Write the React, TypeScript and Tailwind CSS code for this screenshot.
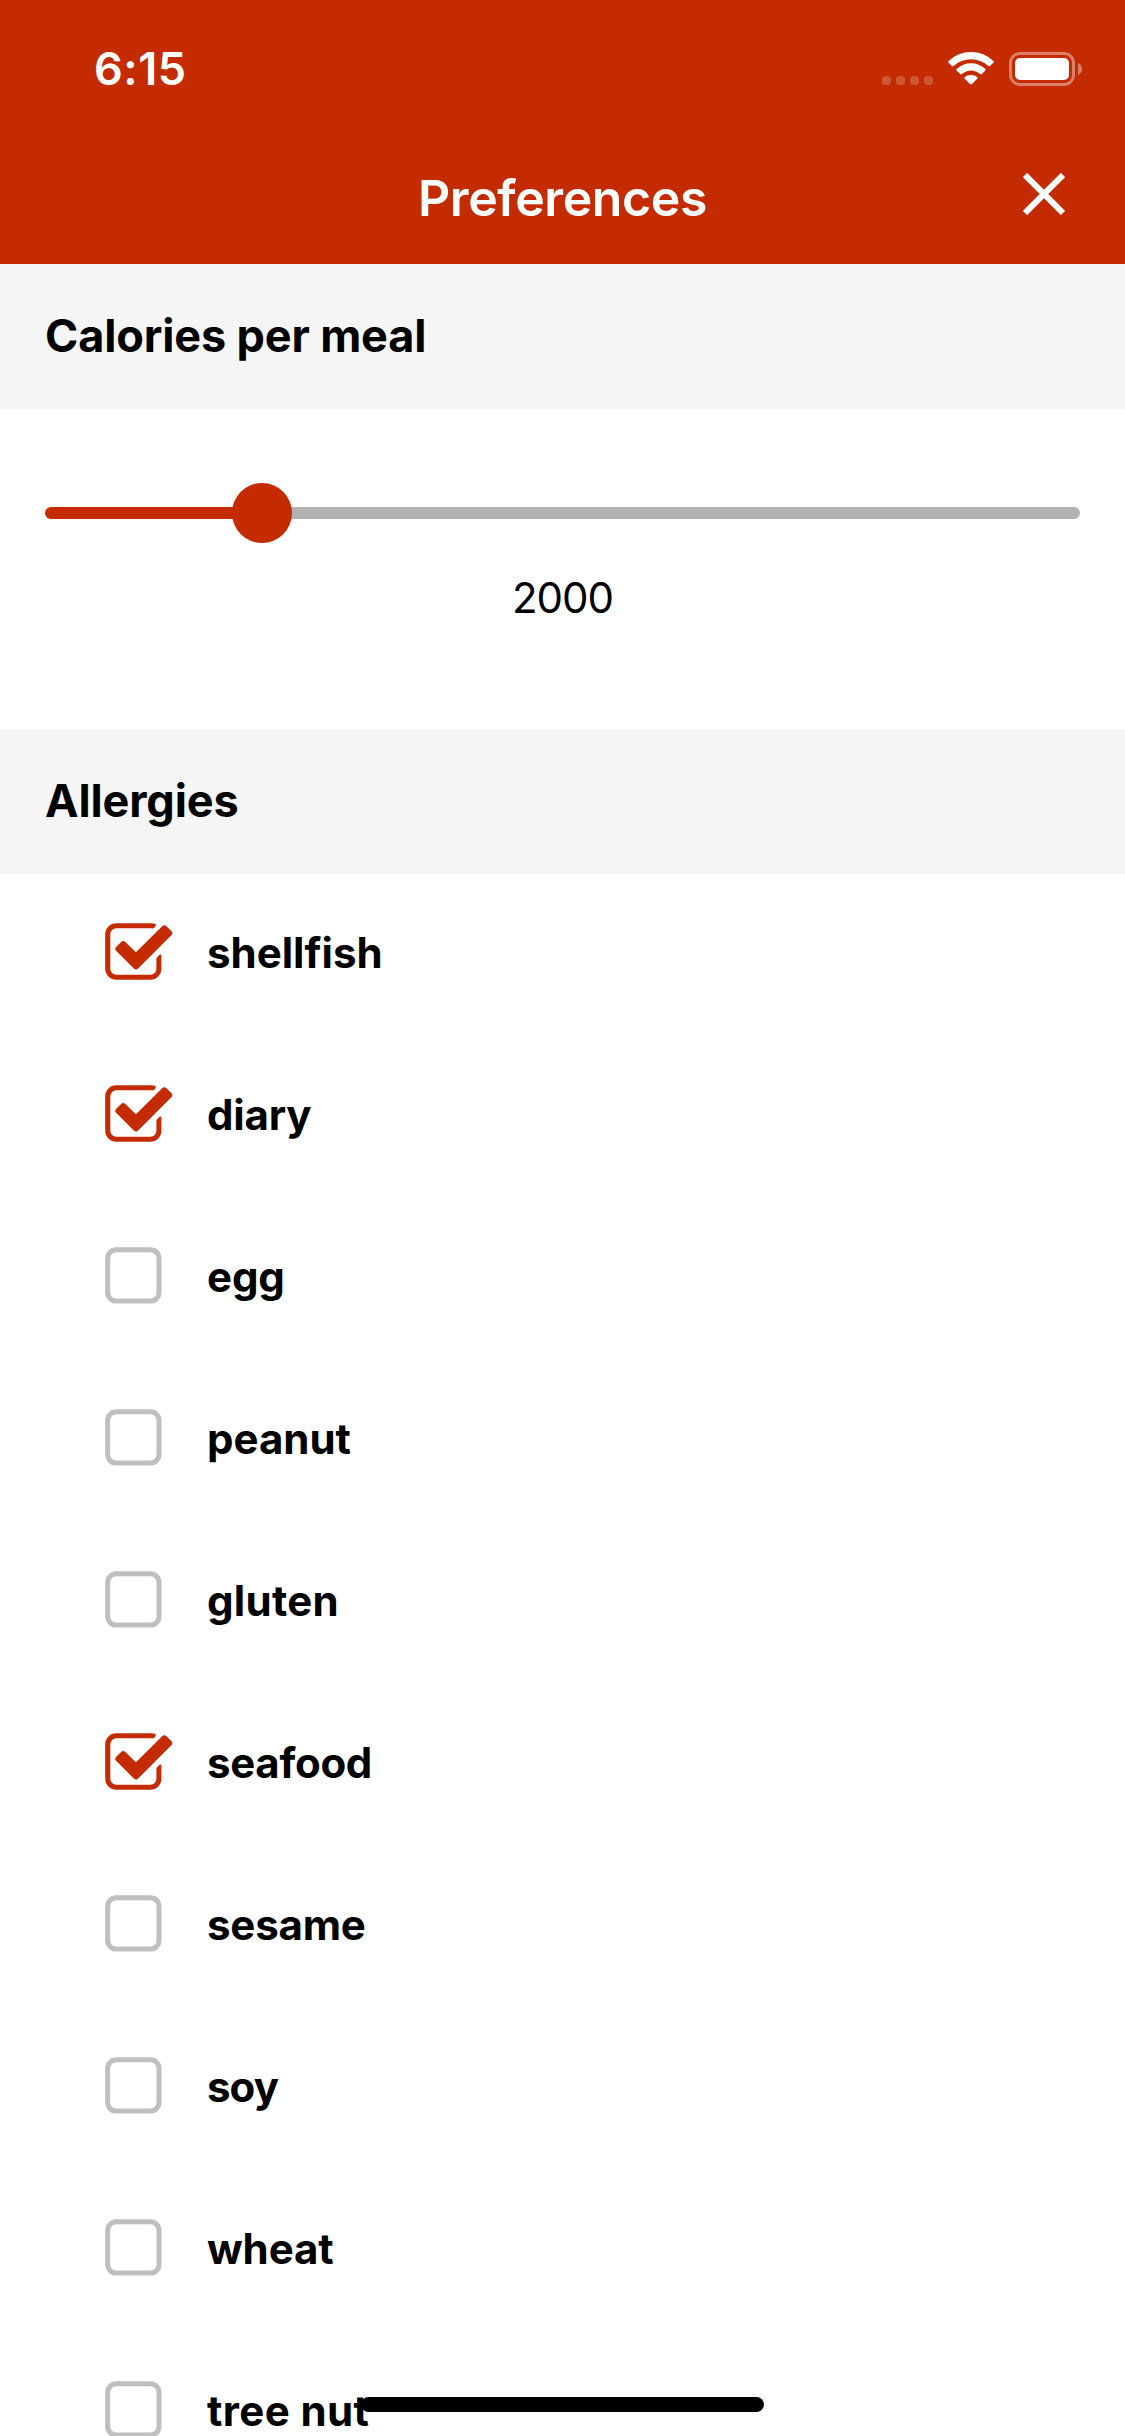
const allergies = [
  { label: 'shellfish', checked: true, spacing: 'tracking-normal' },
  { label: 'diary', checked: true, spacing: 'tracking-[-0.2px]' },
  { label: 'egg', checked: false, spacing: 'tracking-[-0.1px]' },
  { label: 'peanut', checked: false, spacing: 'tracking-normal' },
  { label: 'gluten', checked: false, spacing: 'tracking-[0.3px]' },
  { label: 'seafood', checked: true, spacing: 'tracking-[-0.3px]' },
  { label: 'sesame', checked: false, spacing: 'tracking-[-0.2px]' },
  { label: 'soy', checked: false, spacing: 'tracking-[-0.9px]' },
  { label: 'wheat', checked: false, spacing: 'tracking-[-0.1px]' },
  { label: 'tree nut', checked: false, spacing: 'tracking-[0.4px]' },
];

function Checkbox({ checked }: { checked: boolean }) {
  return (
    <svg className="h-[57px] w-[68px] shrink-0" viewBox="0 0 68 57" fill="none">
      {checked ? (
        <>
          <path
            d="M51 1.2Q49.5.3 45.5.3H11.3A11 11 0 0 0 .2 11.3V45.7A11 11 0 0 0 11.3 56.7H45.4A11 11 0 0 0 56.4 45.7V32.5Q56.2 31 54.8 31.6L51.4 35V45.7A6 6 0 0 1 45.4 51.7H11.3A6 6 0 0 1 5.3 45.7V11.3A6 6 0 0 1 11.3 5.3H47.2Q48.5 5.7 49.5 4.5Q50.8 3 51 1.2Z"
            fill="#c42b00"
          />
          <path
            d="M13.4 25.9L18.2 21.1L31 33.5L59.3 5.4L64.2 10.2L31 43.4Z"
            fill="#c42b00"
            stroke="#c42b00"
            strokeWidth="6"
            strokeLinejoin="round"
          />
        </>
      ) : (
        <rect x="2.7" y="2.8" width="51.3" height="51.3" rx="8.5" stroke="#bfbfbf" strokeWidth="5" />
      )}
    </svg>
  );
}

function StatusBar() {
  return (
    <div className="flex h-[132px] items-start justify-between pt-[42px] pr-[43px] pl-[94px] text-white">
      <span className="text-[45px] leading-[54px] font-semibold tracking-[0.5px]">6:15</span>
      <div className="flex pt-[10px]">
        <div className="mt-[24px] mr-[15px] flex h-[9px] gap-[5px]">
          <i className="size-[9px] rounded-[3.5px] bg-white/20" />
          <i className="size-[9px] rounded-[3.5px] bg-white/20" />
          <i className="size-[9px] rounded-[3.5px] bg-white/20" />
          <i className="size-[9px] rounded-[3.5px] bg-white/20" />
        </div>
        <svg className="mr-[15px] h-[33px] w-[46px]" viewBox="0 0 46 33" fill="white">
          <path d="M.6 9Q-.2 10 .7 10.8L4 14Q5 14.6 5.9 13.8Q13 7.2 23 7.2T40.1 13.8Q41 14.6 42 14L45.3 10.8Q46.2 10 45.4 9Q36 0 23 0T.6 9Z" />
          <path d="M8.6 17.1Q8 17.9 8.8 18.7L12.2 22.1Q13.2 22.7 14 22Q18 18.4 23 18.4T32 22Q32.8 22.7 33.8 22.1L37.2 18.7Q38 17.9 37.4 17.1Q31 11.2 23 11.2T8.6 17.1Z" />
          <path d="M16.5 25.2Q16 26 16.8 26.8L22 32.1Q23 33 24 32.1L29.2 26.8Q30 26 29.5 25.2Q27 22.9 23 22.9T16.5 25.2Z" />
        </svg>
        <svg className="h-[34px] w-[73px]" viewBox="0 0 73 34">
          <rect x="1.5" y="1.5" width="63" height="31" rx="9.5" fill="none" stroke="white" strokeOpacity=".4" strokeWidth="3" />
          <rect x="6" y="6" width="54" height="22" rx="5" fill="white" />
          <path d="M69 11Q73 13 73 17T69 23Z" fill="white" fillOpacity=".4" />
        </svg>
      </div>
    </div>
  );
}

function SectionHeader({ children }: { children: string }) {
  return (
    <h2 className="h-[145px] bg-[#f5f5f5] pt-[45px] pl-[45px] text-[45px] leading-[54px] font-bold tracking-[-0.13px]">{children}</h2>
  );
}

export default function App() {
  return (
    <div className="relative h-[2436px] w-[1125px] overflow-hidden bg-white font-['Inter',sans-serif] text-black">
      <header className="h-[264px] bg-[#c42b00] text-white">
        <StatusBar />
        <div className="grid grid-cols-[1fr_auto_1fr] items-start pt-[36px]">
          <h1 className="col-start-2 text-[50px] leading-[60px] font-semibold tracking-[-0.4px]">Preferences</h1>
          <button aria-label="Close" className="mt-[5px] mr-[60px] justify-self-end">
            <svg className="size-[42px]" viewBox="0 0 42 42" stroke="white" strokeWidth="6">
              <path d="M2 2L40 40M40 2L2 40" />
            </svg>
          </button>
        </div>
      </header>
      <SectionHeader>Calories per meal</SectionHeader>
      <section className="flex h-[320px] flex-col items-center pt-[74px]">
        <div className="flex h-[60px] w-[1035px] items-center">
          <div className="h-[12px] w-[190px] rounded-l-[6px] bg-[#c42b00]" />
          <div className="relative z-10 -mx-[3px] size-[60px] rounded-full bg-[#c42b00]" />
          <div className="h-[12px] flex-1 rounded-r-[6px] bg-[#b2b2b2]" />
        </div>
        <output className="mt-[30px] text-[42px] leading-[50px] tracking-[-1px]">2000</output>
      </section>
      <SectionHeader>Allergies</SectionHeader>
      <ul className="pl-[105px]">
        {allergies.map((item) => (
          <li key={item.label} className="flex h-[162px] items-start pt-[49px]">
            <Checkbox checked={item.checked} />
            <span className={`ml-[34px] pt-[5px] text-[42px] leading-[50px] font-bold ${item.spacing}`}>{item.label}</span>
          </li>
        ))}
      </ul>
      <div className="absolute top-[2397px] left-[361px] h-[15px] w-[403px] rounded-full bg-black" />
    </div>
  );
}
